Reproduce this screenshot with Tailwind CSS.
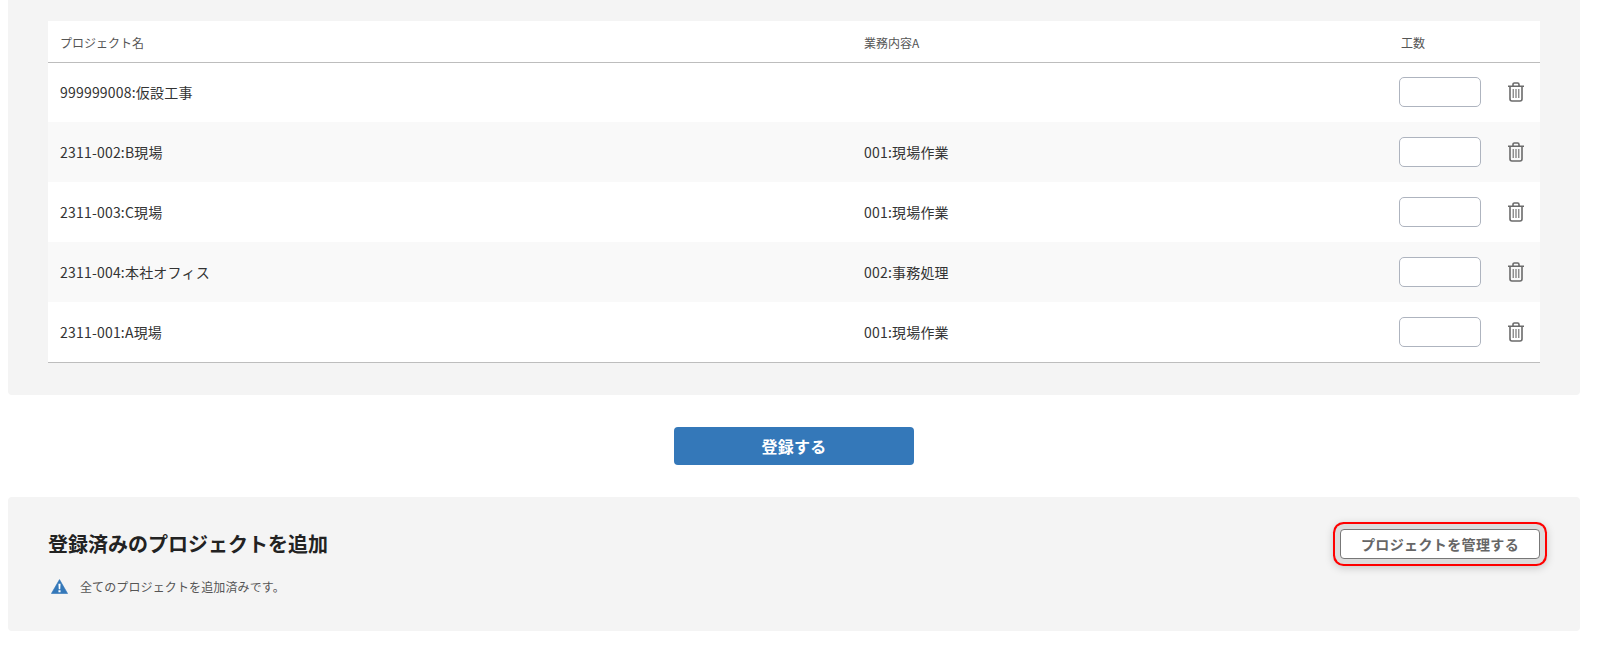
<!DOCTYPE html>
<html lang="ja">
<head>
  <meta charset="UTF-8" />
  <title>工数登録</title>
  <script src="https://cdn.jsdelivr.net/npm/@tailwindcss/browser@4"></script>
</head>
<body class="bg-white text-[#333] font-['Noto_Sans_CJK_JP','Noto_Sans',sans-serif] overflow-hidden">
  <div class="pl-2 pr-[31px] pb-[30px]">

    <!-- Selected projects -->
    <div class="bg-[#f4f4f4] rounded-b pt-[21px] pb-[32px] px-10">
      <table class="w-full table-fixed border-collapse bg-white text-sm tracking-[0.2px]">
        <thead>
          <tr class="h-[41px] border-b border-[#bdbdbd] text-xs text-left text-[#555] tracking-normal">
            <th class="w-[804px] pl-3 pt-[3px] font-normal">プロジェクト名</th>
            <th class="w-[535px] pl-3 pt-[3px] font-normal">業務内容A</th>
            <th class="pl-3.5 pt-[3px] font-normal">工数</th>
          </tr>
        </thead>
        <tbody class="border-b border-[#bdbdbd]">
          <tr class="h-[60px]">
            <td class="pl-3">999999008:仮設工事</td>
            <td class="pl-3"></td>
            <td class="pl-3">
              <div class="flex items-center gap-[26px]">
                <input class="w-[82px] h-[30px] bg-white border border-[#aeb4bf] rounded-[5px]" />
                <svg class="w-[18px] h-5 text-[#6b6b6b]" viewBox="0 0 18 20" fill="none" stroke="currentColor"><path stroke-width="1.6" d="M1 4.2h16M3 4.2V17a2 2 0 0 0 2 2h8a2 2 0 0 0 2-2V4.2M6 4V2.4A1.4 1.4 0 0 1 7.4 1h3.2A1.4 1.4 0 0 1 12 2.4V4" /><path stroke-width="1.1" d="M6.2 7v9M9 7v9M11.8 7v9" /></svg>
              </div>
            </td>
          </tr>
          <tr class="h-[60px] bg-[#f9f9f9]">
            <td class="pl-3">2311-002:B現場</td>
            <td class="pl-3">001:現場作業</td>
            <td class="pl-3">
              <div class="flex items-center gap-[26px]">
                <input class="w-[82px] h-[30px] bg-white border border-[#aeb4bf] rounded-[5px]" />
                <svg class="w-[18px] h-5 text-[#6b6b6b]" viewBox="0 0 18 20" fill="none" stroke="currentColor"><path stroke-width="1.6" d="M1 4.2h16M3 4.2V17a2 2 0 0 0 2 2h8a2 2 0 0 0 2-2V4.2M6 4V2.4A1.4 1.4 0 0 1 7.4 1h3.2A1.4 1.4 0 0 1 12 2.4V4" /><path stroke-width="1.1" d="M6.2 7v9M9 7v9M11.8 7v9" /></svg>
              </div>
            </td>
          </tr>
          <tr class="h-[60px]">
            <td class="pl-3">2311-003:C現場</td>
            <td class="pl-3">001:現場作業</td>
            <td class="pl-3">
              <div class="flex items-center gap-[26px]">
                <input class="w-[82px] h-[30px] bg-white border border-[#aeb4bf] rounded-[5px]" />
                <svg class="w-[18px] h-5 text-[#6b6b6b]" viewBox="0 0 18 20" fill="none" stroke="currentColor"><path stroke-width="1.6" d="M1 4.2h16M3 4.2V17a2 2 0 0 0 2 2h8a2 2 0 0 0 2-2V4.2M6 4V2.4A1.4 1.4 0 0 1 7.4 1h3.2A1.4 1.4 0 0 1 12 2.4V4" /><path stroke-width="1.1" d="M6.2 7v9M9 7v9M11.8 7v9" /></svg>
              </div>
            </td>
          </tr>
          <tr class="h-[60px] bg-[#f9f9f9]">
            <td class="pl-3">2311-004:本社オフィス</td>
            <td class="pl-3">002:事務処理</td>
            <td class="pl-3">
              <div class="flex items-center gap-[26px]">
                <input class="w-[82px] h-[30px] bg-white border border-[#aeb4bf] rounded-[5px]" />
                <svg class="w-[18px] h-5 text-[#6b6b6b]" viewBox="0 0 18 20" fill="none" stroke="currentColor"><path stroke-width="1.6" d="M1 4.2h16M3 4.2V17a2 2 0 0 0 2 2h8a2 2 0 0 0 2-2V4.2M6 4V2.4A1.4 1.4 0 0 1 7.4 1h3.2A1.4 1.4 0 0 1 12 2.4V4" /><path stroke-width="1.1" d="M6.2 7v9M9 7v9M11.8 7v9" /></svg>
              </div>
            </td>
          </tr>
          <tr class="h-[60px]">
            <td class="pl-3">2311-001:A現場</td>
            <td class="pl-3">001:現場作業</td>
            <td class="pl-3">
              <div class="flex items-center gap-[26px]">
                <input class="w-[82px] h-[30px] bg-white border border-[#aeb4bf] rounded-[5px]" />
                <svg class="w-[18px] h-5 text-[#6b6b6b]" viewBox="0 0 18 20" fill="none" stroke="currentColor"><path stroke-width="1.6" d="M1 4.2h16M3 4.2V17a2 2 0 0 0 2 2h8a2 2 0 0 0 2-2V4.2M6 4V2.4A1.4 1.4 0 0 1 7.4 1h3.2A1.4 1.4 0 0 1 12 2.4V4" /><path stroke-width="1.1" d="M6.2 7v9M9 7v9M11.8 7v9" /></svg>
              </div>
            </td>
          </tr>
        </tbody>
      </table>
    </div>

    <!-- Submit -->
    <div class="flex justify-center py-8">
      <button class="w-[240px] h-[38px] bg-[#3478b9] rounded text-white font-bold tracking-[0.3px]">登録する</button>
    </div>

    <!-- Add project -->
    <div class="bg-[#f4f4f4] rounded h-[134px] pt-8 px-10">
      <div class="flex justify-between items-center">
        <h2 class="text-xl font-bold text-[#222]">登録済みのプロジェクトを追加</h2>
        <button class="w-[200px] h-[30px] bg-white border border-[#777] rounded text-sm font-bold text-[#666] tracking-[0.37px] shadow-[0_0_0_5px_#dcdcdc,0_0_0_7px_#f00,0_2px_8px_7px_rgba(0,0,0,0.18)]">プロジェクトを管理する</button>
      </div>
      <div class="flex items-center gap-3 mt-5 ml-[3px] text-xs text-[#555] tracking-[0.12px]">
        <svg class="w-[17px] h-[15px]" viewBox="0 0 16 14"><path fill="#3478b9" stroke="#3478b9" stroke-width="0.6" stroke-linejoin="round" d="M8 .5 15.6 13.6H.4Z" /><path fill="#fff" d="M7 4.5h2l-.3 5H7.3ZM7 10.5h2v2H7Z" /></svg>
        <span>全てのプロジェクトを追加済みです。</span>
      </div>
    </div>
  </div>
</body>
</html>
